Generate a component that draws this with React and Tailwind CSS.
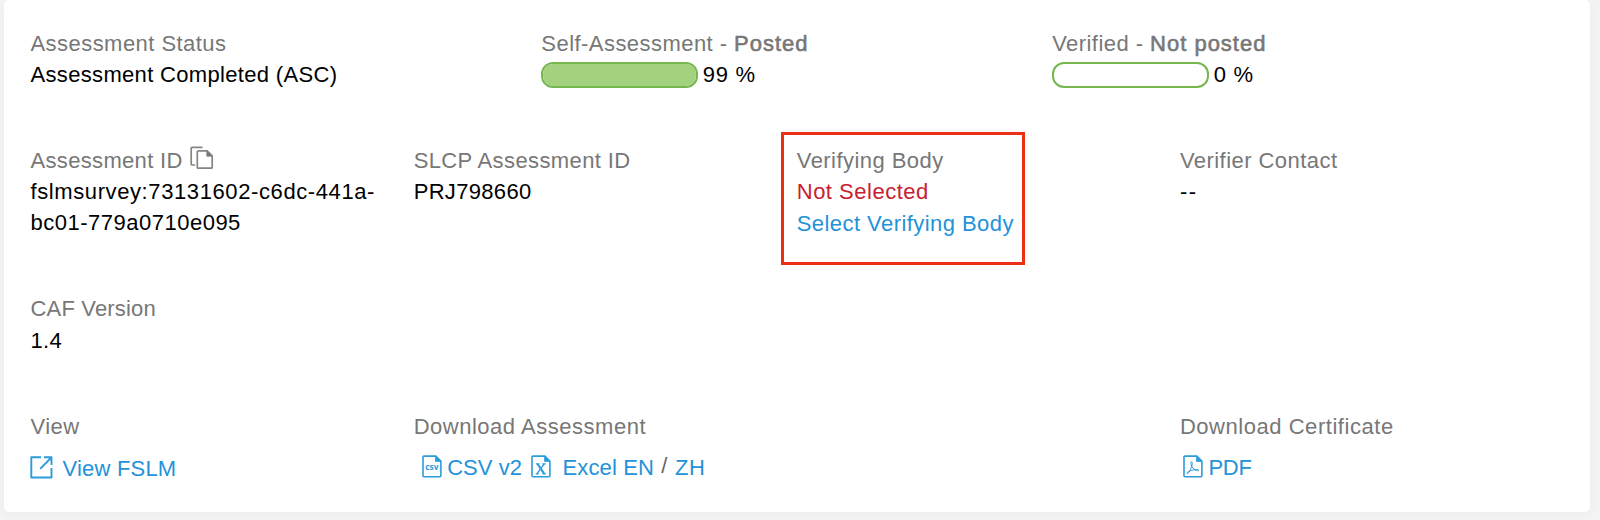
import React from 'react';

function Field({ label, children, className = '', labelClass = 'tracking-[0.45px]' }) {
  return (
    <div className={`flex min-w-0 flex-col ${className}`}>
      <div className={`text-[#777] ${labelClass}`}>{label}</div>
      {children}
    </div>
  );
}

function Medium({ children }) {
  return (
    <span className="tracking-[1px] [-webkit-text-stroke:0.6px_#777]">{children}</span>
  );
}

function Progress({ value }) {
  return (
    <div className="flex items-center gap-[5px]">
      <div className="mt-px h-[26px] w-[156.5px] overflow-hidden rounded-[12px] border-2 border-[#76b64e] bg-white">
        <div className="h-full bg-[#a2d27d]" style={{ width: value > 98 ? '100%' : `${value}%` }} />
      </div>
      <span className="whitespace-pre tracking-[0.7px]">{value} %</span>
    </div>
  );
}

function CopyIcon() {
  return (
    <svg width="24" height="24" viewBox="0 0 24 24" fill="none" stroke="#858585" strokeWidth="1.7">
      <path d="M12.5 1.4H2.2a1 1 0 0 0-1 1V18a1 1 0 0 0 1 1h3" />
      <path d="M8 4.8h9.2l5 5v11.6a.8.8 0 0 1-.8.8H8.1a.8.8 0 0 1-.8-.8V5.6a.8.8 0 0 1 .8-.8z" />
      <path d="M16.8 4.8l5.4 5.4h-5.4z" fill="#777" strokeWidth="0.8" />
    </svg>
  );
}

function OpenIcon() {
  return (
    <svg width="23" height="23" viewBox="0 0 23 23" fill="none" stroke="#2d9cdb" strokeWidth="1.9" strokeLinejoin="round">
      <path d="M11 1.3H1.3v20.2h20.2V12" />
      <path d="M14 1.3h7.5v7.7M21.3 1.5L10.2 12.8" />
    </svg>
  );
}

function FileIcon({ children }) {
  return (
    <svg width="20" height="23" viewBox="0 0 20 23" fill="none" stroke="#2d9cdb" strokeWidth="1.6">
      <path d="M2 1.1h11.8l5.1 5.1v14.6a1 1 0 0 1-1 1H2a1 1 0 0 1-1-1V2.1a1 1 0 0 1 1-1z" />
      <path d="M13.5 1.1v5.3h5.4z" fill="#2d9cdb" strokeWidth="0.8" />
      {children}
    </svg>
  );
}

export default function App() {
  return (
    <div className="flex h-[520px] w-[1600px] flex-col bg-[#f3f3f3] pl-1 pr-[10px] font-['Liberation_Sans',Arial,sans-serif] text-[22px] leading-[31.4px] tracking-[0.33px] text-black">
      <div className="h-[512px] rounded-[5px] bg-white pl-[26.5px] pt-[27.5px] shadow-[0_2px_12px_rgba(0,0,0,0.03)]">
        <div className="grid h-[117.2px] w-[1532.5px] grid-cols-3">
          <Field label="Assessment Status">
            <div>Assessment Completed (ASC)</div>
          </Field>
          <Field label={<>Self-Assessment - <Medium>Posted</Medium></>}>
            <Progress value={99} />
          </Field>
          <Field label={<>Verified - <Medium>Not posted</Medium></>}>
            <Progress value={0} />
          </Field>
        </div>

        <div className="grid h-[148.6px] w-[1532.5px] grid-cols-4">
          <Field
            labelClass="tracking-[0.33px]"
            label={
              <span className="flex h-[31.4px] items-center gap-[7.5px]">
                Assessment ID
                <span className="-mt-[5px]"><CopyIcon /></span>
              </span>
            }
          >
            <div className="tracking-[0.6px]">fslmsurvey:73131602-c6dc-441a-</div>
            <div className="tracking-[0.5px]">bc01-779a0710e095</div>
          </Field>
          <Field label="SLCP Assessment ID" labelClass="tracking-[0.39px]">
            <div>PRJ798660</div>
          </Field>
          <div className="-ml-[16px] -mt-[13px] h-[133.5px] w-[244.5px] border-[3px] border-[#ee2f17] pl-[13px] pt-[10px]">
            <Field label="Verifying Body">
              <div className="tracking-[0.5px] text-[#c9202f]">Not Selected</div>
              <a className="whitespace-nowrap tracking-[0.44px] text-[#2492d8]">Select Verifying Body</a>
            </Field>
          </div>
          <Field label="Verifier Contact">
            <div className="tracking-[1.5px]">--</div>
          </Field>
        </div>

        <div className="h-[117.6px]">
          <Field label="CAF Version" labelClass="tracking-[0.17px]">
            <div>1.4</div>
          </Field>
        </div>

        <div className="grid w-[1532.5px] grid-cols-4">
          <Field label="View">
            <a className="mt-[11px] flex items-center gap-[9.5px] text-[#2492d8]">
              <span className="-ml-[0.5px] -mt-[3px]"><OpenIcon /></span>
              <span className="tracking-[0.2px]">View FSLM</span>
            </a>
          </Field>
          <Field label="Download Assessment" labelClass="tracking-[0.52px]" className="col-span-2">
            <div className="mt-[9.7px] flex items-center pl-2 text-[#2492d8]">
              <span className="-mt-[3px]">
                <FileIcon>
                  <text x="9.9" y="14.5" textAnchor="middle" fontSize="8.4" fontWeight="700" letterSpacing="0" fill="#2d9cdb" stroke="none" fontFamily="Open Sans, sans-serif">csv</text>
                </FileIcon>
              </span>
              <span className="ml-[5.5px] tracking-[0.05px]">CSV v2</span>
              <span className="-mt-[3px] ml-[9px]">
                <FileIcon>
                  <path d="M6.6 9l6.5 9.6" strokeWidth="2.2" />
                  <path d="M13.2 9L6 18.6M5 8.8h3.4M11.3 8.8h3.4M4.8 18.8h3M11.5 18.8h3.4" strokeWidth="1.3" />
                </FileIcon>
              </span>
              <span className="ml-[11.5px] tracking-[0.12px]">Excel EN</span>
              <span className="mx-[7.3px] -mt-1 text-[#666]">/</span>
              <span className="tracking-[0.5px]">ZH</span>
            </div>
          </Field>
          <Field label="Download Certificate" labelClass="tracking-[0.54px]">
            <a className="mt-[9.7px] flex items-center gap-[5.5px] pl-[3px] tracking-[-0.2px] text-[#2492d8]">
              <span className="-mt-[3px]">
                <FileIcon>
                  <path d="M8.6 6.8c-.9 0-.9 1.2-.5 2.9.6 2.3 2.6 4.6 5.6 5.9.9.4 1.8.3 1.9-.3.1-.8-1.3-.8-2.700-.7-2.700.2-5.400.9-7.600 2.200-1.200.7-1.700 1.300-1.300 1.700.5.5 1.500-.7 2.600-2.500 1.300-2.100 2.300-4.600 2.600-6.900.1-1.200.1-2.300-.6-2.300z" strokeWidth="1" />
                </FileIcon>
              </span>
              PDF
            </a>
          </Field>
        </div>
      </div>
    </div>
  );
}
